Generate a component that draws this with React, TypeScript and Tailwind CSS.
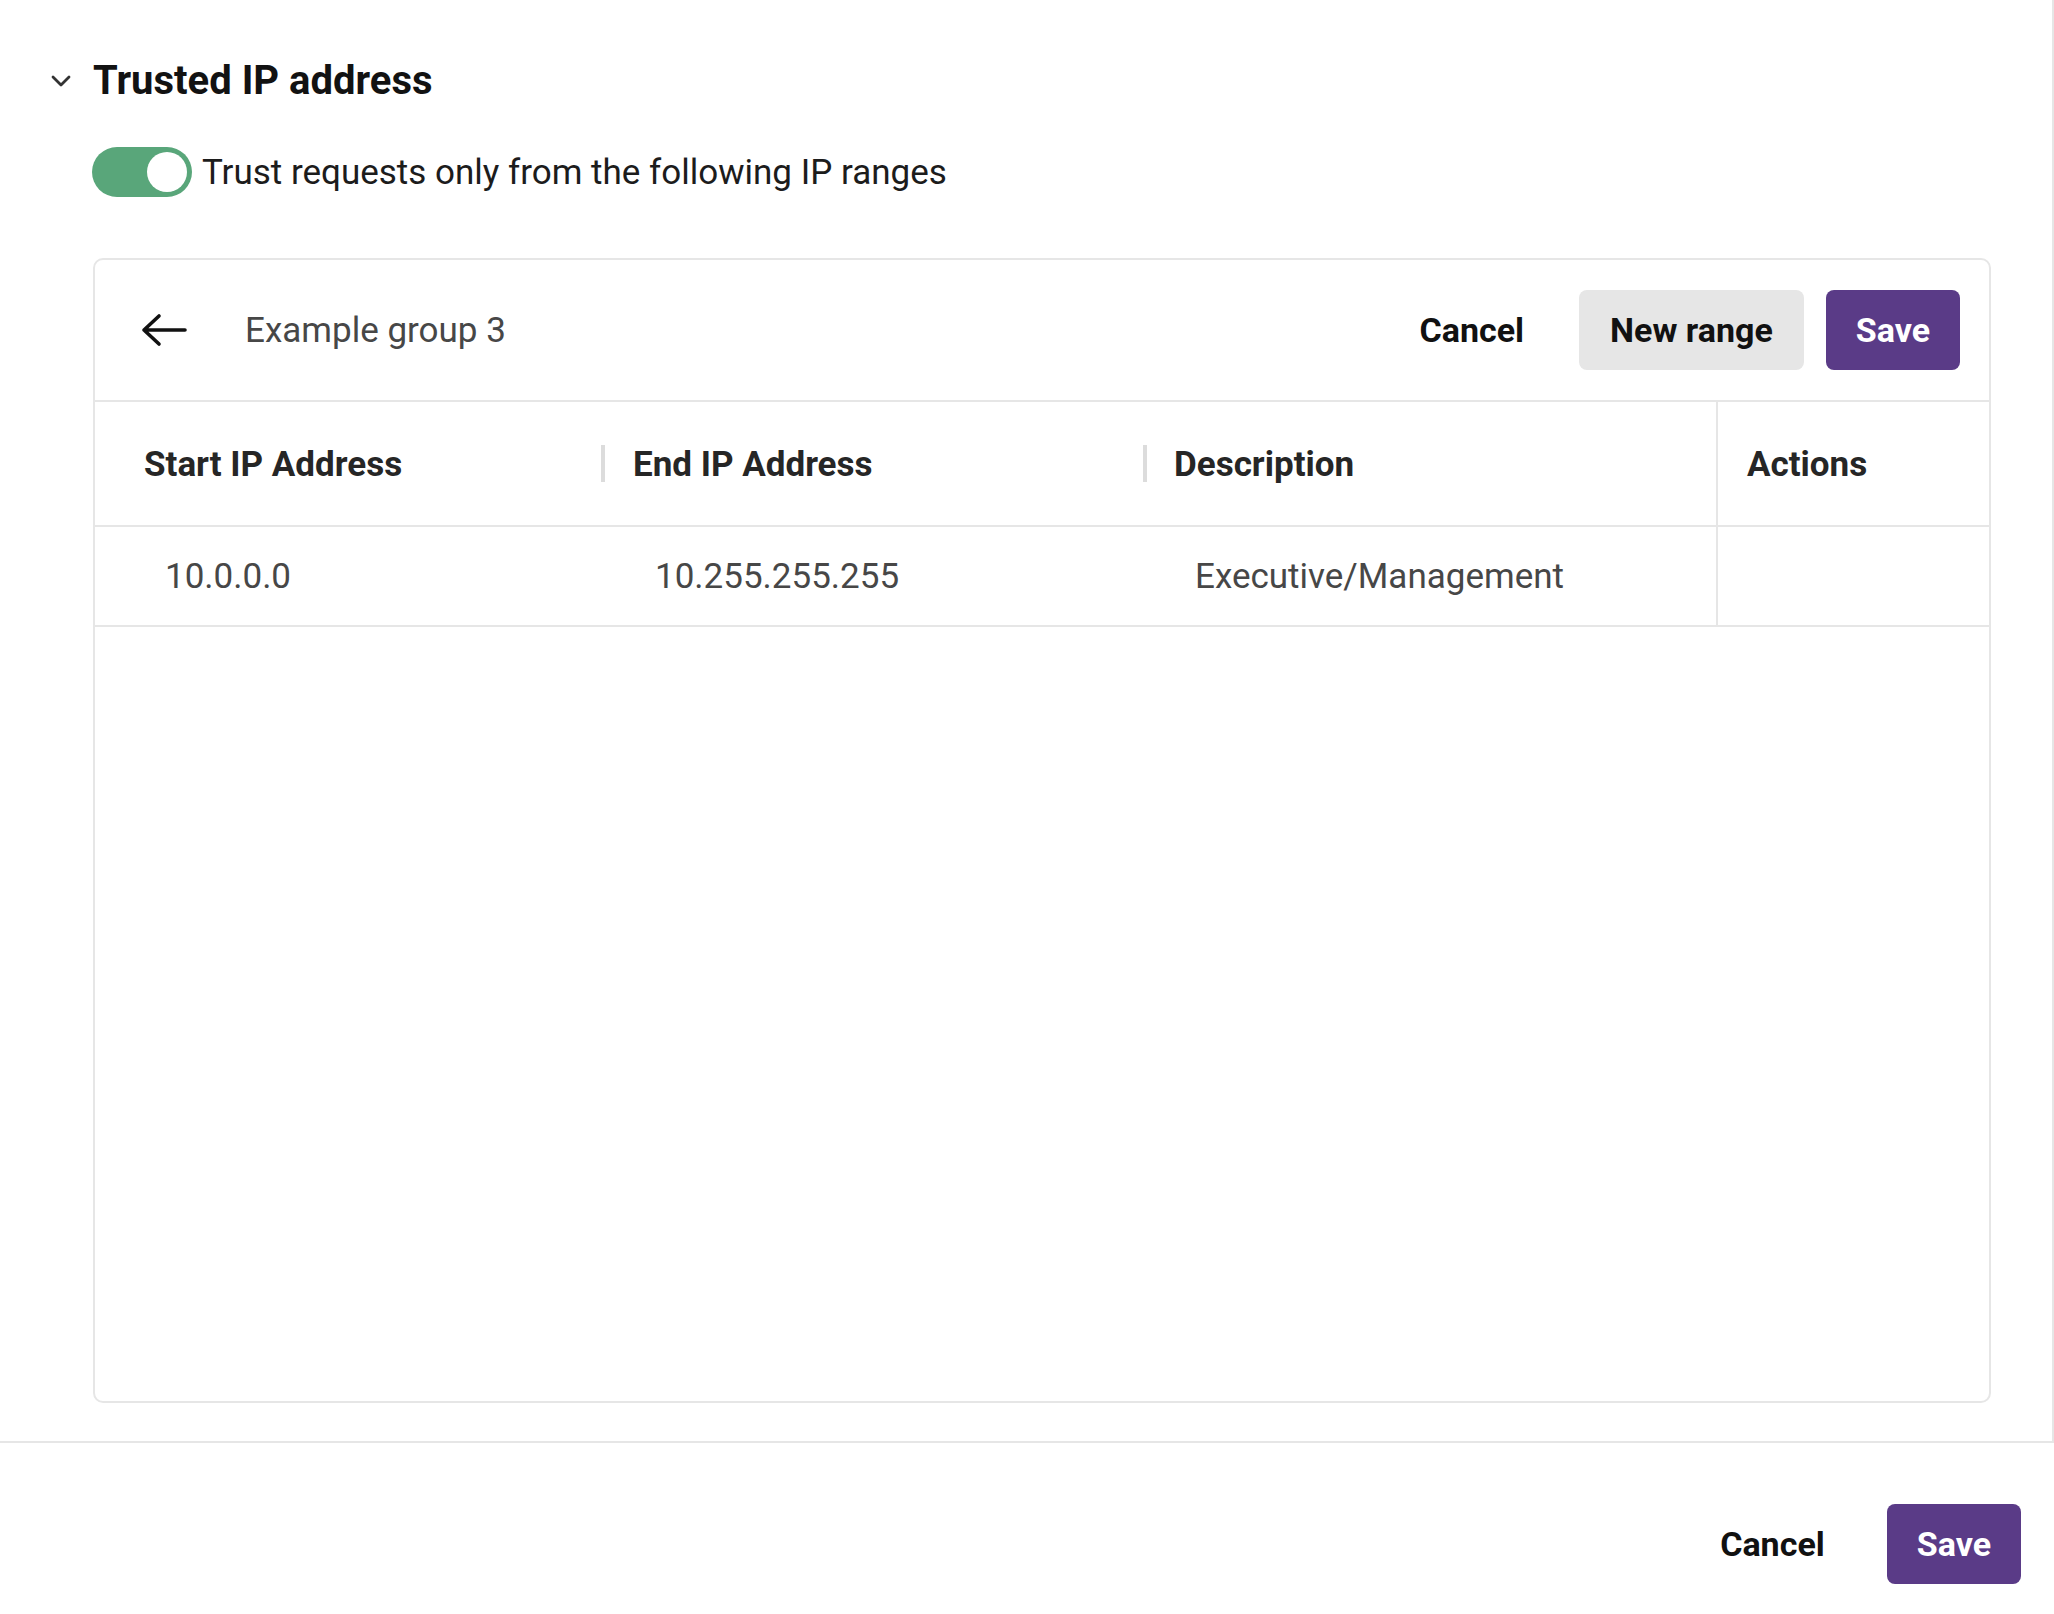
import React from "react"

type Range = { start: string; end: string; description: string }

const RANGES: Range[] = [{ start: "10.0.0.0", end: "10.255.255.255", description: "Executive/Management" }]

function Chevron() {
  return (
    <svg width="20" height="12" viewBox="0 0 20 12" fill="none" aria-hidden="true">
      <polyline points="2,2 10,10 18,2" stroke="#333" strokeWidth="2.8" strokeLinecap="round" strokeLinejoin="round" />
    </svg>
  )
}

function BackArrow() {
  return (
    <svg width="46" height="34" viewBox="0 0 46 34" fill="none" aria-hidden="true">
      <path d="M3 17 H44 M18 3 L3 17 L18 31" stroke="#111" strokeWidth="3.6" strokeLinecap="round" strokeLinejoin="round" />
    </svg>
  )
}

function Toggle({ on }: { on: boolean }) {
  return (
    <button
      role="switch"
      aria-checked={on}
      className="relative h-[50px] w-[100px] shrink-0 rounded-full bg-[#59a67a] p-[5px] flex justify-end"
    >
      <span className="block h-[40px] w-[40px] rounded-full bg-white" />
    </button>
  )
}

function TextButton({ label }: { label: string }) {
  return (
    <button className="h-[80px] px-[30px] rounded-[8px] font-bold text-[34px] text-[#111]">{label}</button>
  )
}

function SaveButton() {
  return (
    <button className="h-[80px] px-[30px] rounded-[8px] bg-[#5a3b87] font-bold text-[34px] text-white">Save</button>
  )
}

const cols = "grid grid-cols-[506px_542px_573px_1fr]"

export default function App() {
  return (
    <div className="w-[2054px] h-[1614px] bg-white flex flex-col font-['Roboto','Liberation_Sans',sans-serif] text-[35px]">
      <section className="h-[1443px] shrink-0 border-r-2 border-b-2 border-[#e6e6e6] pl-[93px] pr-[61px] pt-[57px] pb-[38px] flex flex-col">
        {/* section title */}
        <div className="flex items-center h-[48px] -ml-[93px]">
          <div className="w-[93px] flex justify-end pr-[22px]">
            <Chevron />
          </div>
          <h2 className="text-[40px] leading-[48px] font-bold text-[#121212]">Trusted IP address</h2>
        </div>

        <div className="mt-[42px] flex items-center gap-[10px] h-[50px] -ml-px">
          <Toggle on />
          <span className="text-[35px] leading-[50px] pt-[2px] text-[#1c1c1c]">
            Trust requests only from the following IP ranges
          </span>
        </div>

        {/* group card */}
        <div className="mt-[61px] flex-1 border-2 border-[#e6e6e6] rounded-[10px] flex flex-col">
          <div className="h-[142px] border-b-2 border-[#e6e6e6] flex items-center pl-[46px] pr-[29px]">
            <BackArrow />
            <span className="ml-[58px] text-[#474747] leading-none">Example group 3</span>
            <div className="ml-auto flex items-center gap-[22px]">
              <button className="h-[80px] px-[33px] rounded-[8px] font-bold text-[34px] text-[#111]">Cancel</button>
              <button className="h-[80px] px-[31px] rounded-[8px] bg-[#e6e6e6] font-bold text-[34px] text-[#111]">
                New range
              </button>
              <SaveButton />
            </div>
          </div>

          {/* table head */}
          <div className={`${cols} h-[125px] border-b-2 border-[#e6e6e6] font-bold text-[#262626]`}>
            <div className="flex items-center pl-[49px] pt-[4px]">Start IP Address</div>
            <div className="flex items-center">
              <span className="w-[4px] h-[37px] bg-[#dcdcdc]" />
              <span className="ml-[28px] pt-[4px]">End IP Address</span>
            </div>
            <div className="flex items-center">
              <span className="w-[4px] h-[37px] bg-[#dcdcdc]" />
              <span className="ml-[27px] pt-[4px]">Description</span>
            </div>
            <div className="flex items-center pl-[29px] pt-[4px] border-l-2 border-[#e6e6e6]">Actions</div>
          </div>

          {/* rows */}
          {RANGES.map((r) => (
            <div key={r.start} className={`${cols} h-[100px] border-b-2 border-[#e6e6e6] text-[#474747]`}>
              <div className="flex items-center pl-[70px] pt-[2px]">{r.start}</div>
              <div className="flex items-center pl-[54px] pt-[2px]">{r.end}</div>
              <div className="flex items-center pl-[52px] pt-[2px]">{r.description}</div>
              <div className="border-l-2 border-[#e6e6e6]" />
            </div>
          ))}
        </div>
      </section>

      <footer className="flex-1 flex justify-end items-start pt-[61px] pr-[33px] gap-[32px]">
        <TextButton label="Cancel" />
        <SaveButton />
      </footer>
    </div>
  )
}
